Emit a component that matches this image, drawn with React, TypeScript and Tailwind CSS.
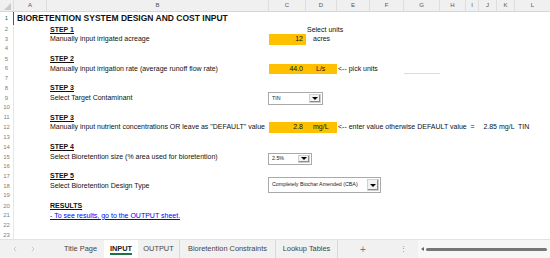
import type { ReactNode } from 'react';
import { ChevronLeft, ChevronRight } from 'lucide-react';

const GRID =
  'grid grid-cols-[14px_33px_222px_37px_31px_33px_34px_36px_26px_13px_18px_18px_36px]';
const LETTERS = ['A', 'B', 'C', 'D', 'E', 'F', 'G', 'H', 'I', 'J', 'K', 'L'];

function Row({ n, tall, active, children }: { n: number; tall?: boolean; active?: boolean; children?: ReactNode }) {
  return (
    <div className={`${GRID} relative items-center ${tall ? 'h-[12.5px]' : 'h-[9.8px]'}`}>
      <div
        className={`h-full flex items-center justify-center text-[6px] border-r ${
          active ? 'text-[#217346] border-[#217346]' : 'text-[#808080] border-[#e6e6e6]'
        }`}
      >
        {n}
      </div>
      {children}
    </div>
  );
}

function Step({ children }: { children: ReactNode }) {
  return <div className="col-start-3 pl-[3px] whitespace-nowrap font-bold underline underline-offset-1">{children}</div>;
}

function Label({ children }: { children: ReactNode }) {
  return <div className="col-start-3 pl-[3px] whitespace-nowrap">{children}</div>;
}

function Dropdown({ label, className }: { label: string; className: string }) {
  return (
    <div className={`absolute flex items-stretch bg-white border border-[#a9a9a9] ${className}`}>
      <span className="flex-1 flex items-center pl-[3px] text-[5.3px] text-[#222] whitespace-nowrap">{label}</span>
      <span className="my-[1px] mr-[1px] w-[12px] flex items-center justify-center bg-[#f2f2f2] border border-[#d0d0d0] shadow-[inset_-1px_-1px_0_#8c8c8c]">
        <span className="w-0 h-0 border-l-[3px] border-r-[3px] border-t-[3.5px] border-l-transparent border-r-transparent border-t-black" />
      </span>
    </div>
  );
}

export default function App() {
  return (
    <div className="w-[550px] h-[258px] overflow-hidden bg-white flex flex-col font-['Liberation_Sans',Arial,sans-serif] text-[7px] text-[#111]">
      <div className="h-[239px] overflow-hidden">
        {/* column headers */}
        <div className={`${GRID} h-[12px] bg-[#f0f0f0] border-b border-[#d6d6d6]`}>
          <div className="relative border-r border-[#dcdcdc]">
            <span className="absolute left-[4px] top-[3px] w-0 h-0 border-b-[7px] border-l-[7px] border-l-transparent border-b-[#c9c9c9]" />
          </div>
          {LETTERS.map((l) => (
            <div key={l} className="flex items-center justify-center text-[6px] text-[#555] border-r border-[#dedede]">
              {l}
            </div>
          ))}
        </div>

        <Row n={1} tall active>
          <div className="col-start-2 pl-[3px] whitespace-nowrap font-bold text-[8.5px]">
            BIORETENTION SYSTEM DESIGN AND COST INPUT
          </div>
        </Row>
        <Row n={2}>
          <Step>STEP 1</Step>
          <div className="col-start-5 pl-[1px] whitespace-nowrap">Select units</div>
        </Row>
        <Row n={3}>
          <Label>Manually input irrigated acreage</Label>
          <div className="col-start-4 h-full bg-[#ffc000] flex items-center justify-end pr-[3px]">12</div>
          <div className="col-start-5 pl-[7px] whitespace-nowrap">acres</div>
        </Row>
        <Row n={4} />
        <Row n={5}>
          <Step>STEP 2</Step>
        </Row>
        <Row n={6}>
          <Label>Manually input irrigation rate (average runoff flow rate)</Label>
          <div className="col-start-4 h-full bg-[#ffc000] flex items-center justify-end pr-[3px]">44.0</div>
          <div className="col-start-5 h-full bg-[#ffc000] flex items-center pl-[10px]">L/s</div>
          <div className="col-start-6 pl-[1px] whitespace-nowrap">&lt;-- pick units</div>
          <div className="col-start-8 self-end border-b border-[#dcdcdc]" />
        </Row>
        <Row n={7} />
        <Row n={8}>
          <Step>STEP 3</Step>
        </Row>
        <Row n={9}>
          <Label>Select Target Contaminant</Label>
          <Dropdown label="TIN" className="left-[268px] top-[-1px] w-[55px] h-[13px]" />
        </Row>
        <Row n={10} />
        <Row n={11}>
          <Step>STEP 3</Step>
        </Row>
        <Row n={12}>
          <Label>Manually input nutrient concentrations OR leave as "DEFAULT" value</Label>
          <div className="col-start-4 h-full bg-[#ffc000] flex items-center justify-end pr-[3px]">2.8</div>
          <div className="col-start-5 h-full bg-[#ffc000] flex items-center pl-[7px]">mg/L</div>
          <div className="col-start-6 pl-[1px] whitespace-nowrap">&lt;-- enter value otherwise DEFAULT value</div>
          <div className="col-start-10 text-center">=</div>
          <div className="col-start-11 text-right">2.85</div>
          <div className="col-start-12 pl-[2px]">mg/L</div>
          <div className="col-start-13 pl-[3px]">TIN</div>
        </Row>
        <Row n={13} />
        <Row n={14}>
          <Step>STEP 4</Step>
        </Row>
        <Row n={15}>
          <Label>Select Bioretention size (% area used for bioretention)</Label>
          <Dropdown label="2.5%" className="left-[268px] top-[1px] w-[44px] h-[12px]" />
        </Row>
        <Row n={16} />
        <Row n={17}>
          <Step>STEP 5</Step>
        </Row>
        <Row n={18}>
          <Label>Select Bioretention Design Type</Label>
          <Dropdown label="Completely Biochar Amended (CBA)" className="left-[268px] top-[-4px] w-[113px] h-[16px]" />
        </Row>
        <Row n={19} />
        <Row n={20}>
          <Step>RESULTS</Step>
        </Row>
        <Row n={21}>
          <div className="col-start-3 pl-[3px] whitespace-nowrap text-[#0000ff] underline underline-offset-1">
            - To see results, go to the OUTPUT sheet.
          </div>
        </Row>
        <Row n={22} />
        <Row n={23} />
      </div>

      {/* sheet tabs */}
      <div className="h-[19px] flex items-stretch bg-[#f1f1f1] border-t border-[#e2e2e2] text-[7.4px] text-[#444]">
        <div className="w-[57px] flex items-center pl-[11px] gap-[10px] text-[#a0a0a0]">
          <ChevronLeft size={8} strokeWidth={1.5} />
          <ChevronRight size={8} strokeWidth={1.5} />
        </div>
        <div className="w-[47px] flex items-center justify-center">Title Page</div>
        <div className="w-[34px] flex flex-col items-center justify-center bg-white">
          <span className="font-bold text-[#222] border-b-2 border-[#1e7145] leading-[9px]">INPUT</span>
        </div>
        <div className="w-[42px] flex items-center justify-center border-r border-[#d8d8d8]">OUTPUT</div>
        <div className="w-[96px] flex items-center justify-center border-r border-[#d8d8d8]">Bioretention Constraints</div>
        <div className="w-[62px] flex items-center justify-center border-r border-[#d8d8d8]">Lookup Tables</div>
        <div className="w-[50px] flex items-center justify-center text-[10px] text-[#777] font-light">+</div>
        <div className="w-[30px] flex items-center justify-center text-[#888]">⋮</div>
        <div className="flex-1 flex items-center gap-[2px] bg-[#f7f7f7] pl-[3px] pr-[3px]">
          <span className="w-0 h-0 border-t-[2.5px] border-b-[2.5px] border-r-[3px] border-t-transparent border-b-transparent border-r-[#666]" />
          <span className="flex-1 h-[3px] rounded-full bg-[#767676]" />
        </div>
      </div>
    </div>
  );
}
